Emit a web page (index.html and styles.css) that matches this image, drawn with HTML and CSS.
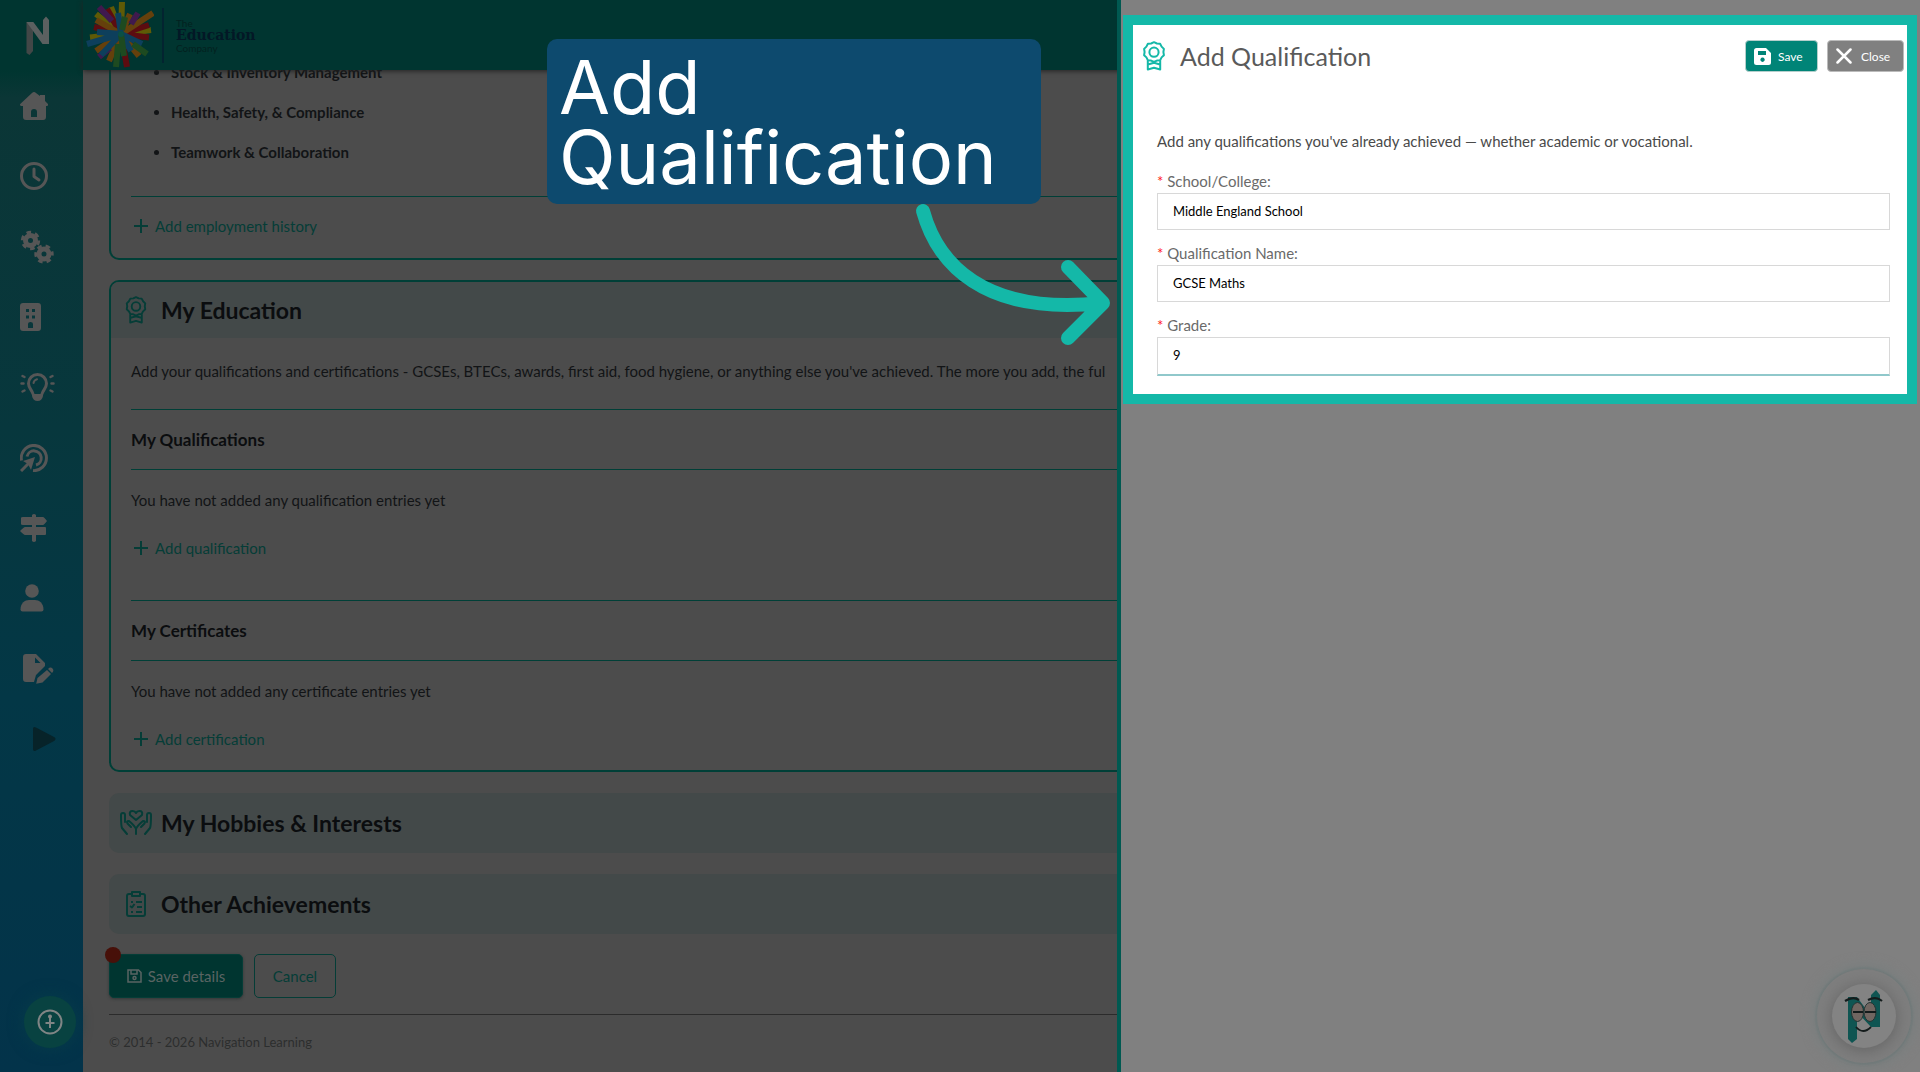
FILE: index.html
```html
<!DOCTYPE html>
<html lang="en">
<head>
<meta charset="utf-8">
<title>Add Qualification</title>
<link rel="stylesheet" href="styles.css">
</head>
<body>
<svg width="0" height="0" class="defs" aria-hidden="true">
  <symbol id="rosette" viewBox="0 0 24 30">
    <g fill="none" stroke="currentColor" stroke-width="2" stroke-linejoin="round">
      <path d="M12 1.2l2.9 1.3 3.2.3 1.5 2.8 2.3 2.3-.5 3.1.5 3.2-2.3 2.2-1.5 2.8-3.2.4-2.9 1.3-2.9-1.3-3.2-.4-1.5-2.8-2.3-2.2.5-3.2-.5-3.1 2.3-2.3 1.500-2.800 3.200-.3z"/>
      <circle cx="12" cy="11.200" r="4.600"/>
      <path d="M5.800 19.500v9l6.200-1.800 6.200 1.800v-9M6 23.500l6-1.800 6 1.800"/>
    </g>
  </symbol>
  <symbol id="plus" viewBox="0 0 14 14"><path d="M7 0v14M0 7h14" stroke="currentColor" stroke-width="2"/></symbol>
</svg>

<div class="app">
  <aside class="sidebar">
    <a class="brand" href="#" aria-label="Home">
      <svg width="24" height="40" viewBox="0 0 24 40"><path d="M.5 6H7v29l-3.500 4-3-2z" fill="#424747"/><path d="M.5 6h6.800L17 19V4l3-3.500L23 4v24h-6.500z" fill="#5b6060"/></svg>
    </a>
    <nav class="nav">
      <a href="#" aria-label="Dashboard"><svg width="28" height="28" viewBox="0 0 28 28"><path fill="currentColor" fill-rule="evenodd" d="M14 0q1 0 2 1l4 3V3h5v6l3 3q.5 1.500-1 2h-1v11q0 3-3 3H6q-3 0-3-3V14H1q-1.500-.5-.8-2L12 1q1-1 2-1zM11 25h6v-5q0-3-3-3t-3 3z"/></svg></a>
      <a href="#" aria-label="Time"><svg width="28" height="28" viewBox="0 0 28 28"><g fill="none" stroke="currentColor" stroke-width="3" stroke-linecap="round" stroke-linejoin="round"><circle cx="14" cy="14" r="12.500"/><path d="M14 7v7.500l5 3.500"/></g></svg></a>
      <a href="#" aria-label="Settings"><svg width="34" height="34" viewBox="0 0 34 34"><g fill="none" stroke="currentColor"><circle cx="10.500" cy="10.500" r="5" stroke-width="5"/><circle cx="10.500" cy="10.500" r="8.200" stroke-width="3" stroke-dasharray="4.600 4" /><circle cx="24" cy="24" r="5" stroke-width="5"/><circle cx="24" cy="24" r="8.200" stroke-width="3" stroke-dasharray="4.600 4" stroke-dashoffset="3"/></g></svg></a>
      <a href="#" aria-label="Company"><svg width="21" height="28" viewBox="0 0 21 28"><path fill="currentColor" fill-rule="evenodd" d="M3 0h15q3 0 3 3v22q0 3-3 3H3q-3 0-3-3V3q0-3 3-3zM6 6v3h3V6zm6 0v3h3V6zM6 12.500v3h3v-3zm6 0v3h3v-3zM8 25h5v-4q0-2-2.500-2T8 21z"/></svg></a>
      <a href="#" aria-label="Ideas"><svg width="35" height="28" viewBox="0 0 35 28"><g fill="none" stroke="currentColor" stroke-width="3" stroke-linecap="round"><path d="M13 21C12 17 8.500 15 8.500 10.500a9 9 0 0 1 18 0C26.500 15 23 17 22 21"/><path d="M13.500 10q.5-3 3.500-3.800" stroke-width="2"/><path d="M1.500 10.500h2M31.500 10.500h2M2.500 3l2 1M32.500 3l-2 1M2.500 18.500l2-1M32.500 18.500l-2-1" stroke-width="2.500"/></g><path d="M12 21h11v2q-1 5-5.500 5T12 23z" fill="currentColor"/></svg></a>
      <a href="#" aria-label="Targets"><svg width="28" height="28" viewBox="0 0 28 28"><g fill="none" stroke="currentColor" stroke-width="3"><path d="M1.500 16.500A12.600 12.600 0 1 1 13 26.600"/><path d="M7 12.500A7.200 7.200 0 1 1 16 21"/><path d="M1 27l8-8"/></g><path d="M3 17l12-4-4 13-3-6z" fill="currentColor"/></svg></a>
      <a href="#" aria-label="Signposts"><svg width="28" height="28" viewBox="0 0 28 28"><path fill="currentColor" d="M12 1q2-2 4 0v2h7q1 0 4 4-3 4-4 4h-7v2h9q1 0 1 1v6q0 1-1 1h-9v6q-2 2-4 0v-6H5q-1 0-5-4 4-4 5-4h7v-2H3q-2 0-2-1V4q0-1 2-1h9z"/></svg></a>
      <a href="#" aria-label="Profile"><svg width="24" height="28" viewBox="0 0 24 28"><circle cx="12" cy="7" r="6.800" fill="currentColor"/><path fill="currentColor" d="M.5 25.500C.5 19 5 16 9 16h6c4 0 8.500 3 8.500 9.500q0 2-2 2h-19q-2 0-2-2z"/></svg></a>
      <a href="#" aria-label="Documents"><svg width="34" height="30" viewBox="0 0 34 30"><path fill="currentColor" fill-rule="evenodd" d="M6 0h10l9 9v3l-9 9-2 7H6q-3 0-3-3V3q0-3 3-3zM15 3.500V9h5.500zM27 16l4 4-8.500 8.500-6.300 1.300 1.300-5.800zM28 15q2.500-2.500 4.500-.5T32 19z"/></svg></a>
      <a class="nav-play" href="#" aria-label="Play"><svg width="23" height="24" viewBox="0 0 23 24"><path fill="currentColor" d="M0 2q0-3 3-1.500l18.500 9.800q2 1.700 0 3.400L3 23.500Q0 25 0 22z"/></svg></a>
    </nav>
    <button class="add-fab" type="button" aria-label="Quick add">
      <svg width="26" height="26" viewBox="0 0 26 26" fill="none" stroke="currentColor" stroke-width="2"><circle cx="13" cy="13" r="11.500"/><path d="M13 9v10M8.500 14h9"/><circle cx="13" cy="7.500" r="1"/></svg>
    </button>
  </aside>

  <div class="page">
    <header class="topbar">
      <svg class="burst" width="68" height="68" viewBox="86 1 68 68" fill="none" stroke-width="6">
        <g stroke="#5f5a06"><path d="M121 34L122 2M121 34L111 7M121 34L96 14M121 34L90 37.500M121 34L151 30"/></g>
        <g stroke="#5c0c10"><path d="M121 34L107 9M121 34L94 27M121 34L127 67M121 34L149 37.500M121 34L149 25"/></g>
        <g stroke="#65400c"><path d="M121 34L96 20M121 34L96 51M121 34L109 61M121 34L139 56M121 34L153 13M121 34L130 14"/></g>
        <g stroke="#40194d"><path d="M112 21L99 7M110 48L99 57M131 24L138 13"/></g>
        <g stroke="#0d3f5c"><path d="M121 34L87 44M121 34L101 55M121 34L142 44M121 34L118 13M121 34L131 51M121 34L97 32"/></g>
        <g stroke="#1d4a20"><path d="M118 44L116 67M133 44L147 54M122 30L125 17M121 34L124 56"/></g>
        <circle cx="121" cy="34" r="3" fill="#0a4f45"/>
      </svg>
      <div class="org">
        <span class="org-small">The</span>
        <strong>Education</strong>
        <span class="org-small">Company</span>
      </div>
    </header>

    <main class="content">
      <section class="card card-employment">
        <ul>
          <li>Stock &amp; Inventory Management</li>
          <li>Health, Safety, &amp; Compliance</li>
          <li>Teamwork &amp; Collaboration</li>
        </ul>
        <hr>
        <a class="add-link" href="#"><svg width="14" height="14"><use href="#plus"/></svg>Add employment history</a>
      </section>

      <section class="card">
        <h2 class="card-head"><svg width="32" height="28"><use href="#rosette"/></svg>My Education</h2>
        <div class="card-body">
          <p class="intro">Add your qualifications and certifications - GCSEs, BTECs, awards, first aid, food hygiene, or anything else you've achieved. The more you add, the ful</p>
          <h3>My Qualifications</h3>
          <p>You have not added any qualification entries yet</p>
          <a class="add-link" href="#"><svg width="14" height="14"><use href="#plus"/></svg>Add qualification</a>
          <h3 class="second">My Certificates</h3>
          <p>You have not added any certificate entries yet</p>
          <a class="add-link" href="#"><svg width="14" height="14"><use href="#plus"/></svg>Add certification</a>
        </div>
      </section>

      <h2 class="panel-head"><svg width="32" height="26" viewBox="0 0 32 26" fill="none" stroke="currentColor" stroke-width="2" stroke-linejoin="round" stroke-linecap="round"><path d="M16 10L10 5Q9 1 12.500 1q2.500 0 3.500 2 1-2 3.500-2Q23 1 22 5zM16 24v-5q-1-3-7-8-3 0-1.500 2.500L11 17M16 19q1-3 7-8 3 0 1.500 2.500L21 17M7 24l-5-6Q1 16 1 5q0-2 2-2t2 2v7M25 24l5-6q1-2 1-13 0-2-2-2t-2 2v7"/></svg>My Hobbies &amp; Interests</h2>
      <h2 class="panel-head"><svg width="32" height="26" viewBox="0 0 20 26" fill="none" stroke="currentColor" stroke-width="2" stroke-linejoin="round"><path d="M6 3H3Q1 3 1 5v18q0 2 2 2h14q2 0 2-2V5q0-2-2-2h-3M6 1h8v4H6zM5 11h2M10 11h6M4 15l2 1.500L8.500 13M11 16h5M5 21h2M10 21h6"/></svg>Other Achievements</h2>

      <div class="actions">
        <button class="btn-save-details" type="button"><svg width="15" height="14" viewBox="0 0 15 14" fill="none" stroke="currentColor" stroke-width="1.500"><path d="M1 1h10.500L14 3.500V13H1zM4 1v4h6V1"/><circle cx="7.500" cy="9" r="1.500"/></svg>Save details</button>
        <button class="btn-cancel" type="button">Cancel</button>
        <span class="alert-dot"></span>
      </div>
      <footer>© 2014 - 2026 Navigation Learning</footer>
    </main>
  </div>
</div>

<aside class="drawer">
  <form class="dialog">
    <div class="dialog-head">
      <svg width="24" height="30"><use href="#rosette"/></svg>
      <h1>Add Qualification</h1>
      <button class="btn btn-save" type="button"><svg width="17" height="17" viewBox="0 0 17 17"><path fill="currentColor" fill-rule="evenodd" d="M2.500 0H12l5 5v9.500q0 2.500-2.500 2.500h-12Q0 17 0 14.500v-12Q0 0 2.500 0zM4 3v4h8V3zM8.500 9.500a2.200 2.200 0 1 0 .1 0z"/></svg>Save</button>
      <button class="btn btn-close" type="button"><svg width="16" height="16" viewBox="0 0 16 16"><path d="M1.500 1.500l13 13M14.500 1.500l-13 13" stroke="currentColor" stroke-width="2.500" stroke-linecap="round"/></svg>Close</button>
    </div>
    <div class="dialog-body">
      <p>Add any qualifications you've already achieved — whether academic or vocational.</p>
      <label for="school"><span>*</span> School/College:</label>
      <input id="school" type="text" value="Middle England School">
      <label for="qualification"><span>*</span> Qualification Name:</label>
      <input id="qualification" type="text" value="GCSE Maths">
      <label for="grade"><span>*</span> Grade:</label>
      <input id="grade" class="active" type="text" value="9">
    </div>
  </form>
  <button class="helper" type="button" aria-label="Open assistant">
    <svg width="42" height="58" viewBox="0 0 42 58"><path fill="#0f5552" d="M5 10h9l14 19V8l5-5 4 5v32h-9L14 25v27l-5 4-4-4z"/><g fill="#716661" stroke="#253332" stroke-width="1"><ellipse cx="14.500" cy="25" rx="6" ry="9.500"/><ellipse cx="27" cy="25" rx="6" ry="9.500"/></g><g fill="none" stroke="#141c1c" stroke-width="1.800"><path d="M10 25h10M22 25h11M13 40q7 8 15 0"/><path d="M2 14q8-5 14-1M25 13q8-4 14 1" stroke-width="2.200"/></g></svg>
  </button>
</aside>

<div class="callout">Add Qualification</div>
<svg class="arrow" width="200" height="150" viewBox="914 200 200 150" fill="none" stroke="#14b8a8" stroke-width="14" stroke-linecap="round" stroke-linejoin="round"><path d="M923 211C937 262 982 316 1102 303M1068 267L1103 303L1068 338"/></svg>
</body>
</html>
```
FILE: styles.css
```css
* { box-sizing: border-box; }
body {
  margin: 0;
  height: 100vh;
  overflow: hidden;
  background: #4c4c4c;
  color: #121416;
  font: 15px/24px Lato, "Open Sans", sans-serif;
}
button, input { font-family: inherit; }
a { color: inherit; text-decoration: none; }
h1, h2, h3, p, ul { margin: 0; }
.defs { position: absolute; }

.app { display: flex; height: 100%; }

/* Sidebar */
.sidebar {
  display: flex;
  flex-direction: column;
  flex: none;
  width: 83px;
  padding-bottom: 24px;
  background: linear-gradient(#003530 0, #003530 70px, #0b3636 98px, #07373d 40%, #033746 65%, #03334a 100%);
}
.brand { display: flex; align-items: center; height: 71px; padding-left: 26px; }
.nav { display: grid; grid-auto-rows: 1fr; height: 703px; color: #565656; }
.nav a { display: flex; align-items: center; padding-left: 20px; }
.nav .nav-play { padding-left: 33px; color: #072329; }
.add-fab {
  display: grid;
  place-items: center;
  width: 52px;
  height: 52px;
  margin: auto 0 0 24px;
  padding: 0;
  border: 0;
  border-radius: 50%;
  background: #084241;
  box-shadow: 0 0 16px #063c4a;
  color: #808585;
}

/* Page */
.page { flex: 1; min-width: 0; }
.topbar {
  position: relative;
  z-index: 1;
  display: flex;
  align-items: center;
  height: 70px;
  padding-left: 3px;
  background: #003530;
  box-shadow: 0 1px 5px #222;
}
.org {
  display: flex;
  flex-direction: column;
  margin-left: 8px;
  padding: 10px 0 10px 12px;
  border-left: 2px solid #032430;
  color: #031826;
  font: bold 14px/15px "DejaVu Serif", serif;
}
.org-small { font: 10px/10px Lato, sans-serif; color: #03211f; }

.content {
  display: flex;
  flex-direction: column;
  gap: 20px;
  margin-top: -10px;
  padding: 0 26px;
}
.card {
  border: 2px solid #003f37;
  border-radius: 10px;
  overflow: hidden;
}
.card-employment {
  padding: 0 20px 20px;
  border-top: 0;
  border-radius: 0 0 10px 10px;
}
.card ul { padding-left: 40px; font-weight: bold; }
.card li { margin-bottom: 16px; }
.card hr { margin: 32px 0 17px; border: 0; border-top: 1px solid #003f37; }
.card-head, .panel-head {
  display: flex;
  align-items: center;
  gap: 9px;
  height: 56px;
  background: #434949;
  color: #0b0d0f;
  font-size: 23px;
  font-weight: bold;
}
.card-head { padding-left: 9px; }
.card-head svg, .panel-head svg { color: #053d37; }
.panel-head { height: 60px; margin-top: 1px; padding-left: 11px; border-radius: 10px; }
.card-body { padding: 21px 20px 19px; }
.card-body .intro { margin: 0 0 26px; white-space: nowrap; }
.card h3 {
  padding: 18px 0 17px;
  border: solid #003f37;
  border-width: 1px 0;
  color: #0b0d0f;
  font-size: 17px;
  font-weight: bold;
}
.card-body p { margin: 18px 0 24px; }
.card .second { margin-top: 40px; }
.add-link { display: flex; align-items: center; gap: 7px; padding-left: 3px; color: #053d37; }

.actions { position: relative; display: flex; gap: 11px; }
.actions button {
  display: flex;
  align-items: center;
  justify-content: center;
  gap: 6px;
  height: 44px;
  padding: 0;
  border: 1px solid #053d37;
  border-radius: 5px;
  font-size: 15px;
}
.actions .btn-save-details { width: 134px; background: #003530; color: #5a6463; box-shadow: 0 1px 3px #303636; }
.actions .btn-cancel { width: 82px; background: none; color: #053d37; }
.alert-dot {
  position: absolute;
  top: -7px;
  left: -4px;
  width: 16px;
  height: 16px;
  border-radius: 50%;
  background: #471009;
}
footer { padding-top: 15px; margin-top: -4px; border-top: 1px solid #2b2b2b; color: #2c2e2e; font-size: 13px; }

/* Drawer */
.drawer {
  position: fixed;
  z-index: 2;
  top: 0;
  right: 0;
  bottom: 0;
  width: 803px;
  max-width: 100%;
  padding: 15px 3px 0 2px;
  border-left: 4px solid #005951;
  background: #808080;
}
.dialog { padding-bottom: 18px; border: 10px solid #14b8a8; background: #fff; color: #4a4a4a; }
.dialog-head { display: flex; align-items: center; gap: 9px; padding: 15px 3px 0 9px; }
.dialog-head svg { flex: none; }
.dialog-head > svg { color: #14b8a8; }
.dialog-head h1 { flex: 1; margin-left: 5px; color: #5a5a5a; font-size: 25px; font-weight: normal; }
.btn {
  display: flex;
  align-items: center;
  gap: 7px;
  width: 73px;
  height: 32px;
  padding: 0 0 0 8px;
  border: 1px solid #b5cfcc;
  border-radius: 4px;
  color: #fff;
  font-size: 12px;
}
.btn-save { background: #008477; }
.btn-close { width: 77px; gap: 9px; border-color: #bbb; background: #808080; }
.dialog-body { padding: 57px 17px 0 24px; }
.dialog-body p { margin-bottom: 16px; }
.dialog-body label { display: block; color: #6a6a6a; }
.dialog-body label span { color: #ff2020; }
.dialog-body input {
  display: block;
  width: 100%;
  height: 37px;
  margin-bottom: 11px;
  padding: 0 15px 2px;
  border: 1px solid #d8d8d8;
  outline: 0;
  background: #fff;
  color: #000;
  font-size: 13px;
}
.dialog-body .active { height: 39px; margin-bottom: 0; border-bottom: 2px solid #90c8cb; }
.helper {
  position: absolute;
  right: 24px;
  bottom: 24px;
  display: grid;
  place-items: center;
  width: 64px;
  height: 64px;
  padding: 0;
  border: 0;
  border-radius: 50%;
  background: #838383;
  box-shadow: 0 2px 14px 1px #666, 0 0 0 15px #7e7e7e, 0 0 2px 17px #727b7b, 0 0 10px 22px #7b7f7f;
}

/* Tutorial annotation */
.callout {
  position: fixed;
  z-index: 3;
  top: 39px;
  left: 547px;
  width: 494px;
  padding: 13px 12px 12px;
  border-radius: 10px;
  background: #0d4a6e;
  color: #fff;
  font: 74px/70px Inter, sans-serif;
}
.arrow { position: fixed; z-index: 3; top: 200px; left: 914px; }
```
